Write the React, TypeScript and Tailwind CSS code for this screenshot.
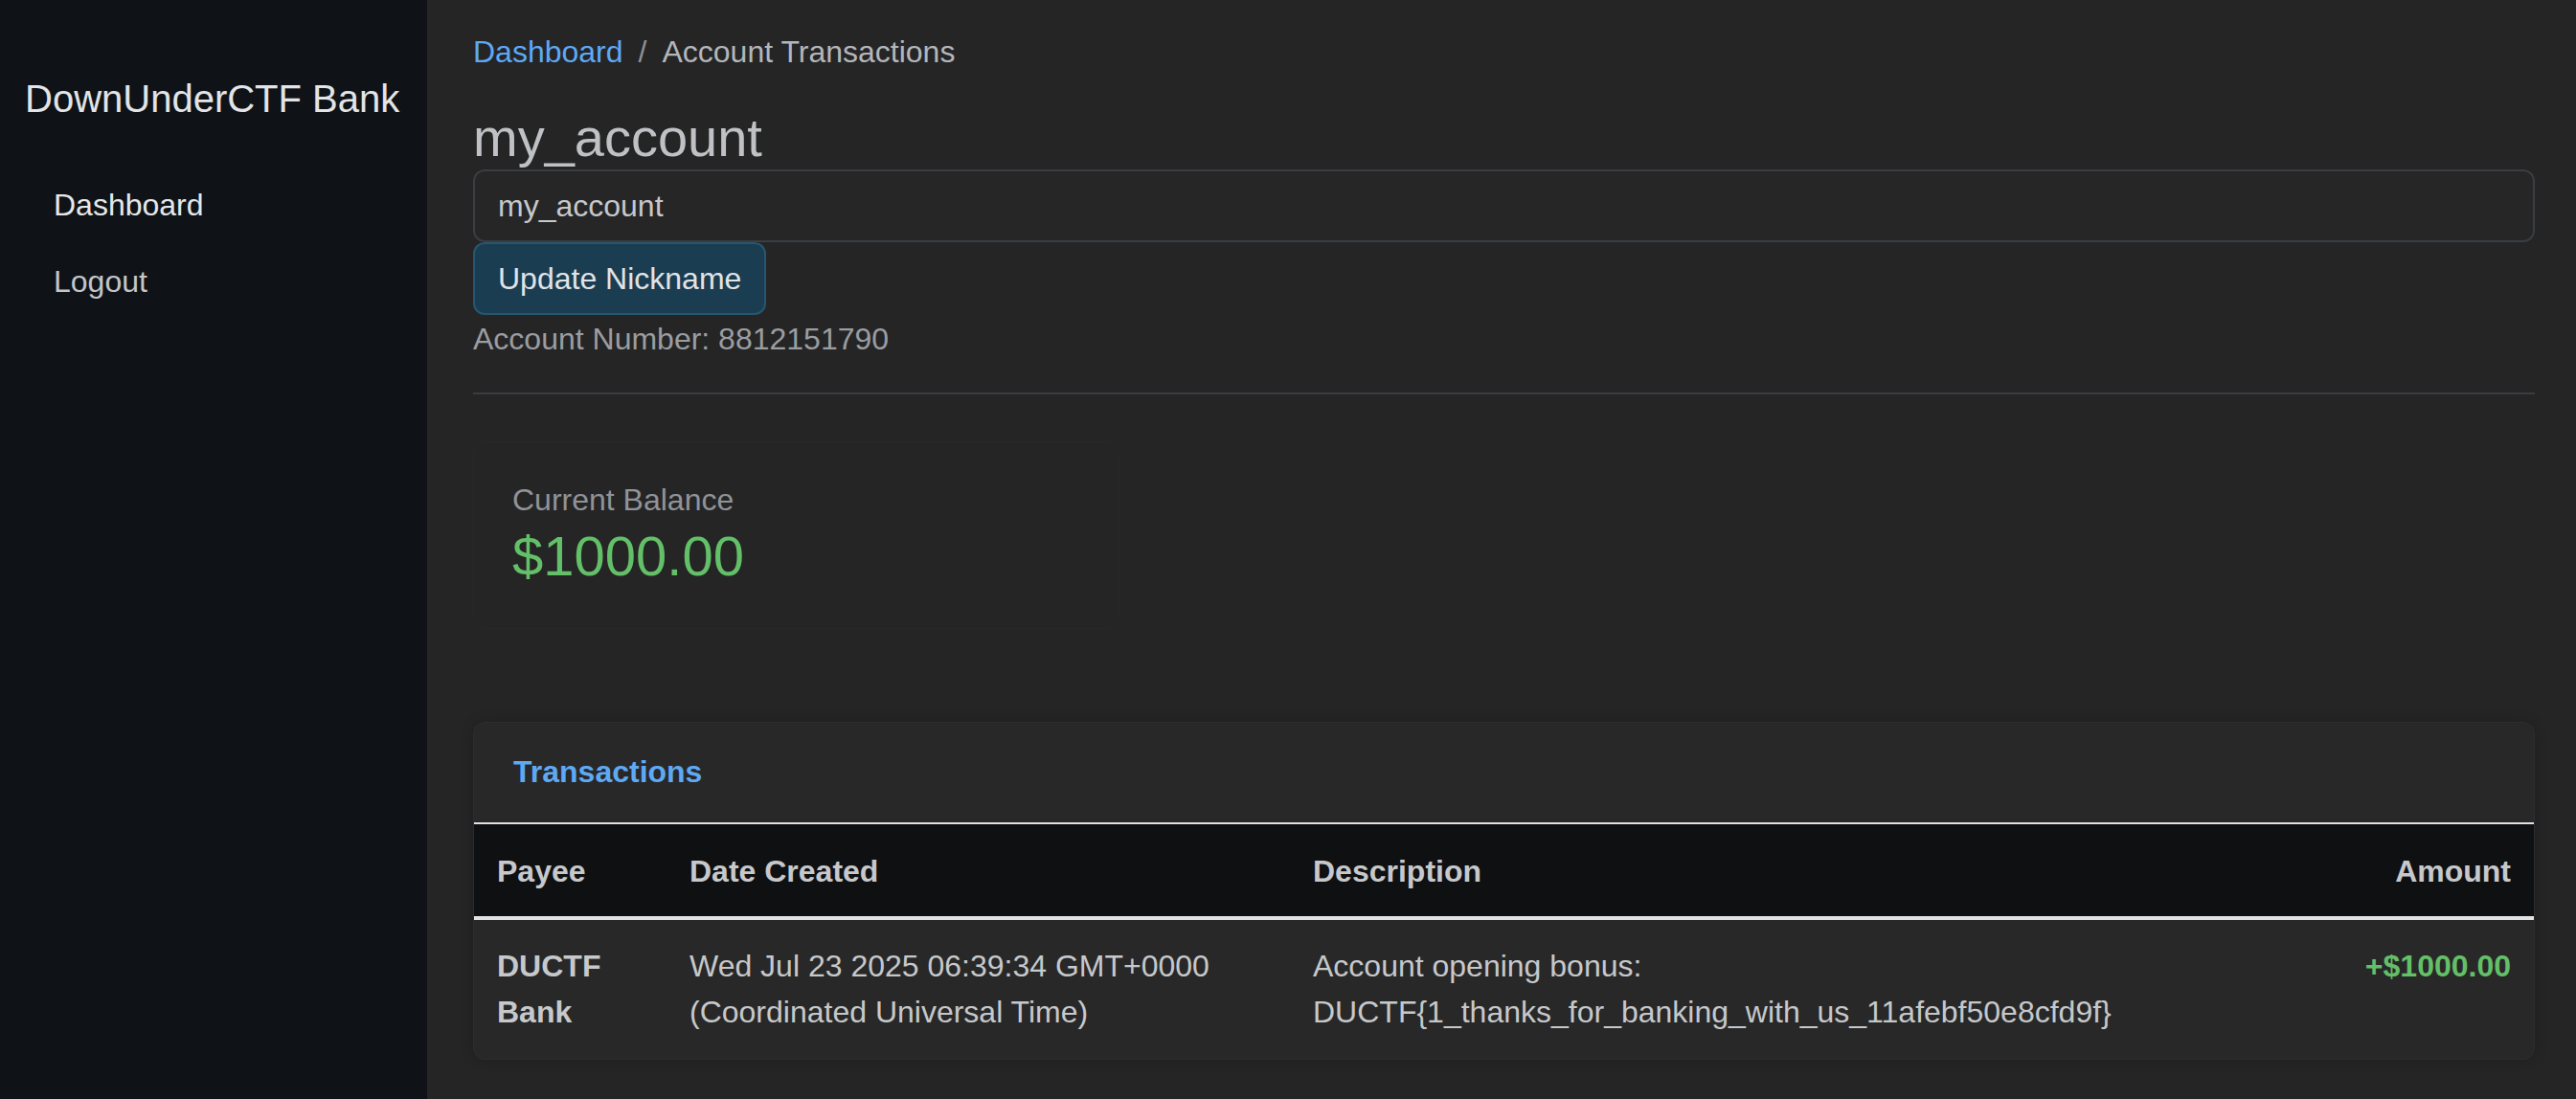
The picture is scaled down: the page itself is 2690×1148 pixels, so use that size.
import React from 'react';

const FONT = "font-['Liberation_Sans','Helvetica_Neue',Arial,sans-serif]";

const Sidebar: React.FC = () => (
  <aside className="w-[446px] shrink-0 bg-[#0f1317] px-[26px] pt-[79px]">
    <div className="text-[40px] leading-[48px] text-[#e2e4e7]">DownUnderCTF Bank</div>
    <nav className="mt-[47px] flex flex-col">
      <a className="px-[30px] py-[16px] text-[32px] leading-[48px] text-[#e6e7e9]">Dashboard</a>
      <a className="px-[30px] py-[16px] text-[32px] leading-[48px] text-[#c3c5c8]">Logout</a>
    </nav>
  </aside>
);

const Transactions: React.FC = () => (
  <div className="mt-[97px] rounded-[12px] border border-[#2d2d2d] bg-[#282828] shadow-[0_0_14px_rgba(0,0,0,0.18)]">
    <div className="px-[41px] pt-[27px] pb-[29px] text-[32px] font-bold leading-[48px] text-[#5ea9f4]">
      Transactions
    </div>
    <table className="w-full table-fixed border-collapse text-[32px] leading-[48px] text-[#c6c8cb]">
      <thead>
        <tr className="border-t-2 border-b-4 border-[#e0e2e6] bg-[#0f1012]">
          <th className="w-[201px] px-[24px] pt-[25px] pb-[23px] text-left font-bold">Payee</th>
          <th className="w-[651px] px-[24px] pt-[25px] pb-[23px] text-left font-bold">Date Created</th>
          <th className="px-[24px] pt-[25px] pb-[23px] text-left font-bold">Description</th>
          <th className="w-[218px] px-[24px] pt-[25px] pb-[23px] text-right font-bold">Amount</th>
        </tr>
      </thead>
      <tbody>
        <tr>
          <td className="px-[24px] pt-[24px] pb-[25px] align-top font-bold">DUCTF Bank</td>
          <td className="px-[24px] pt-[24px] pb-[25px] align-top">
            Wed Jul 23 2025 06:39:34 GMT+0000 (Coordinated Universal Time)
          </td>
          <td className="px-[24px] pt-[24px] pb-[25px] align-top">
            Account opening bonus: DUCTF{'{'}1_thanks_for_banking_with_us_11afebf50e8cfd9f{'}'}
          </td>
          <td className="px-[24px] pt-[24px] pb-[25px] text-right align-top font-bold text-[#63bf68]">
            +$1000.00
          </td>
        </tr>
      </tbody>
    </table>
  </div>
);

const App: React.FC = () => {
  return (
    <div className={`flex min-h-screen w-full bg-[#252526] ${FONT}`}>
      <Sidebar />

      <main className="min-w-0 flex-1 pl-[48px] pr-[43px] pt-[30px]">
        {/* breadcrumb */}
        <div className="flex text-[32px] leading-[48px]">
          <a className="text-[#5ea9f4]">Dashboard</a>
          <span className="px-[16px] text-[#8e9196]">/</span>
          <span className="text-[#b3b6ba]">Account Transactions</span>
        </div>

        <h3 className="mt-[32px] text-[56px] font-medium leading-[67px] text-[#bfc1c4]">my_account</h3>

        <input
          defaultValue="my_account"
          className="block h-[76px] w-full rounded-[12px] border-2 border-[#3a3d41] bg-[#262627] px-[24px] text-[32px] text-[#c6c8cb] outline-none"
        />
        <button className="block h-[76px] rounded-[12px] border-2 border-[#275670] bg-[#1a3d52] px-[24px] text-[32px] text-[#e1e3e5]">
          Update Nickname
        </button>
        <div className="mt-[1px] text-[32px] leading-[48px] text-[#9a9da1]">Account Number: 8812151790</div>

        <hr className="mt-[32px] border-t-2 border-[#3a3c42]" />

        {/* balance */}
        <div className="mt-[49px] w-[676px] rounded-[12px] border border-[#282829] bg-[#252526] pl-[40px] pt-[36px] pb-[42px]">
          <div className="text-[32px] leading-[48px] text-[#909398]">Current Balance</div>
          <div className="mt-[1px] text-[58px] leading-[67px] text-[#63bf68]">$1000.00</div>
        </div>

        <Transactions />
      </main>
    </div>
  );
};

export default App;
